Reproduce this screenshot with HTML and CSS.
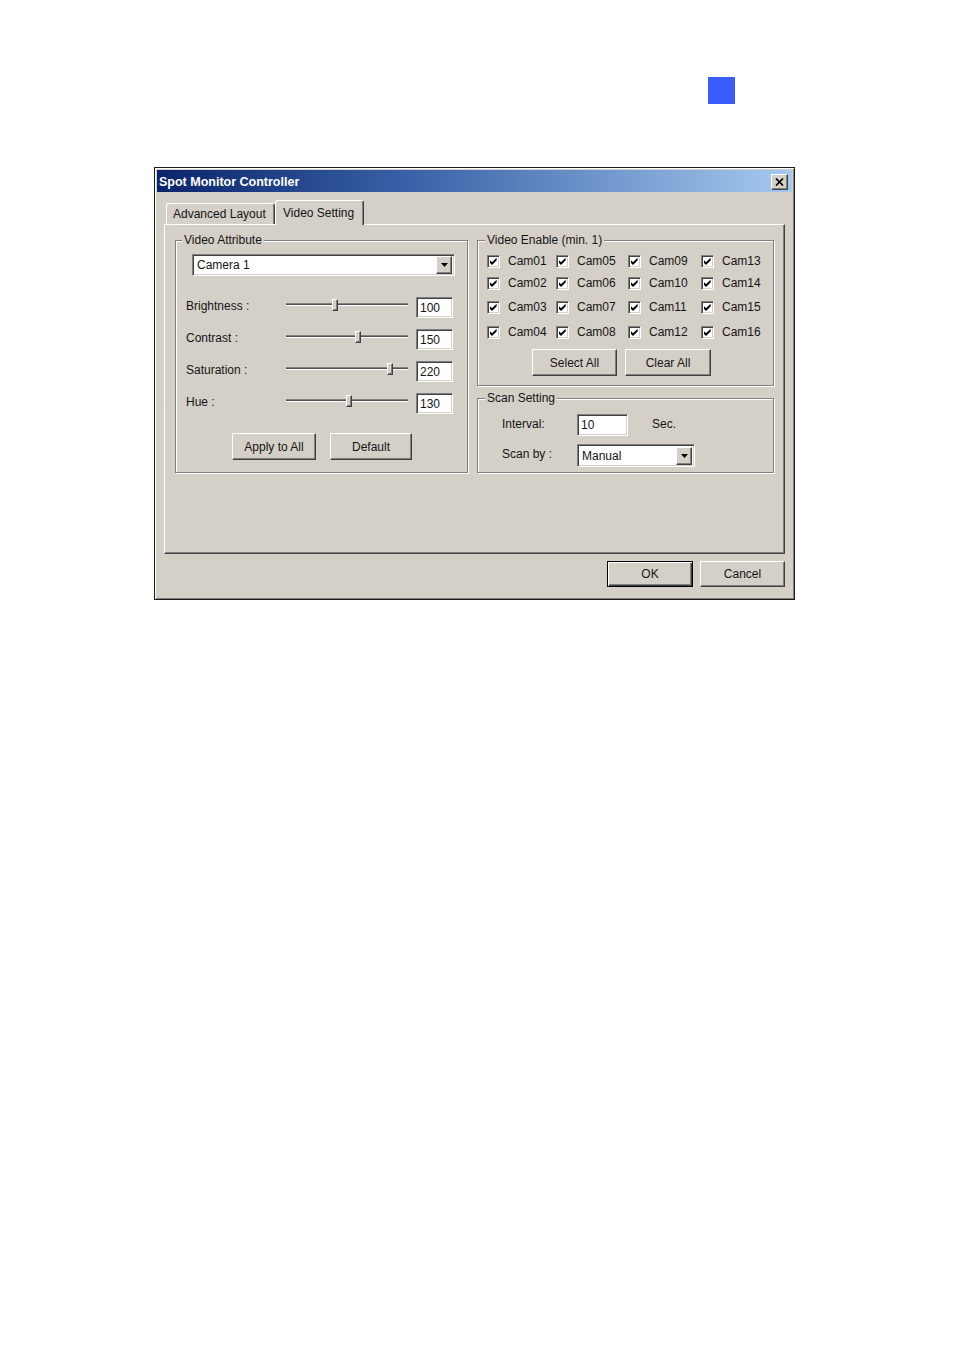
FILE: index.html
```html
<!DOCTYPE html>
<html>
<head>
<meta charset="utf-8">
<title>Spot Monitor Controller</title>
<link rel="stylesheet" href="styles.css">
</head>
<body>
<div class="page">
  <div class="marker"></div>
  <div class="dialog">
    <div class="titlebar">
      <span class="title">Spot Monitor Controller</span>
      <span class="close-btn raised">
        <svg width="9" height="8" viewBox="0 0 9 8"><path d="M1 0.5 L8 7.5 M8 0.5 L1 7.5" stroke="#000" stroke-width="1.7" fill="none"/></svg>
      </span>
    </div>
    <div class="dlg-body">
      <div class="tabs">
        <div class="tab tab-adv">Advanced Layout</div>
        <div class="tab tab-active">Video Setting</div>
      </div>
      <div class="panel">
        <fieldset class="group group-attr">
          <legend>Video Attribute</legend>
          <div class="combo combo-camera sunken">
            <span class="combo-text">Camera 1</span>
            <span class="combo-btn raised"><svg width="7" height="4" viewBox="0 0 7 4"><path d="M0 0 H7 L3.5 4 Z" fill="#000"/></svg></span>
          </div>
          <div class="sliders">
            <div class="srow">
              <span class="slabel">Brightness :</span>
              <div class="slider"><div class="track"></div><div class="thumb raised" style="left:46px"></div></div>
              <span class="edit edit-val sunken">100</span>
            </div>
            <div class="srow">
              <span class="slabel">Contrast :</span>
              <div class="slider"><div class="track"></div><div class="thumb raised" style="left:69px"></div></div>
              <span class="edit edit-val sunken">150</span>
            </div>
            <div class="srow">
              <span class="slabel">Saturation :</span>
              <div class="slider"><div class="track"></div><div class="thumb raised" style="left:101px"></div></div>
              <span class="edit edit-val sunken">220</span>
            </div>
            <div class="srow">
              <span class="slabel">Hue :</span>
              <div class="slider"><div class="track"></div><div class="thumb raised" style="left:60px"></div></div>
              <span class="edit edit-val sunken">130</span>
            </div>
          </div>
          <div class="btnrow btnrow-attr">
            <span class="btn raised btn-apply">Apply to All</span>
            <span class="btn raised btn-default">Default</span>
          </div>
        </fieldset>
        <div class="rightcol">
          <fieldset class="group group-enable">
            <legend>Video Enable (min. 1)</legend>
            <div class="camgrid">
              <label class="cam"><span class="cb sunken"><svg width="9" height="9" viewBox="0 0 9 9"><path d="M1 3.2 L3 5.2 L7.6 0.8 V3.6 L3 8 L1 6 Z" fill="#000"/></svg></span>Cam01</label>
              <label class="cam"><span class="cb sunken"><svg width="9" height="9" viewBox="0 0 9 9"><path d="M1 3.2 L3 5.2 L7.6 0.8 V3.6 L3 8 L1 6 Z" fill="#000"/></svg></span>Cam05</label>
              <label class="cam"><span class="cb sunken"><svg width="9" height="9" viewBox="0 0 9 9"><path d="M1 3.2 L3 5.2 L7.6 0.8 V3.6 L3 8 L1 6 Z" fill="#000"/></svg></span>Cam09</label>
              <label class="cam"><span class="cb sunken"><svg width="9" height="9" viewBox="0 0 9 9"><path d="M1 3.2 L3 5.2 L7.6 0.8 V3.6 L3 8 L1 6 Z" fill="#000"/></svg></span>Cam13</label>
              <label class="cam"><span class="cb sunken"><svg width="9" height="9" viewBox="0 0 9 9"><path d="M1 3.2 L3 5.2 L7.6 0.8 V3.6 L3 8 L1 6 Z" fill="#000"/></svg></span>Cam02</label>
              <label class="cam"><span class="cb sunken"><svg width="9" height="9" viewBox="0 0 9 9"><path d="M1 3.2 L3 5.2 L7.6 0.8 V3.6 L3 8 L1 6 Z" fill="#000"/></svg></span>Cam06</label>
              <label class="cam"><span class="cb sunken"><svg width="9" height="9" viewBox="0 0 9 9"><path d="M1 3.2 L3 5.2 L7.6 0.8 V3.6 L3 8 L1 6 Z" fill="#000"/></svg></span>Cam10</label>
              <label class="cam"><span class="cb sunken"><svg width="9" height="9" viewBox="0 0 9 9"><path d="M1 3.2 L3 5.2 L7.6 0.8 V3.6 L3 8 L1 6 Z" fill="#000"/></svg></span>Cam14</label>
              <label class="cam"><span class="cb sunken"><svg width="9" height="9" viewBox="0 0 9 9"><path d="M1 3.2 L3 5.2 L7.6 0.8 V3.6 L3 8 L1 6 Z" fill="#000"/></svg></span>Cam03</label>
              <label class="cam"><span class="cb sunken"><svg width="9" height="9" viewBox="0 0 9 9"><path d="M1 3.2 L3 5.2 L7.6 0.8 V3.6 L3 8 L1 6 Z" fill="#000"/></svg></span>Cam07</label>
              <label class="cam"><span class="cb sunken"><svg width="9" height="9" viewBox="0 0 9 9"><path d="M1 3.2 L3 5.2 L7.6 0.8 V3.6 L3 8 L1 6 Z" fill="#000"/></svg></span>Cam11</label>
              <label class="cam"><span class="cb sunken"><svg width="9" height="9" viewBox="0 0 9 9"><path d="M1 3.2 L3 5.2 L7.6 0.8 V3.6 L3 8 L1 6 Z" fill="#000"/></svg></span>Cam15</label>
              <label class="cam"><span class="cb sunken"><svg width="9" height="9" viewBox="0 0 9 9"><path d="M1 3.2 L3 5.2 L7.6 0.8 V3.6 L3 8 L1 6 Z" fill="#000"/></svg></span>Cam04</label>
              <label class="cam"><span class="cb sunken"><svg width="9" height="9" viewBox="0 0 9 9"><path d="M1 3.2 L3 5.2 L7.6 0.8 V3.6 L3 8 L1 6 Z" fill="#000"/></svg></span>Cam08</label>
              <label class="cam"><span class="cb sunken"><svg width="9" height="9" viewBox="0 0 9 9"><path d="M1 3.2 L3 5.2 L7.6 0.8 V3.6 L3 8 L1 6 Z" fill="#000"/></svg></span>Cam12</label>
              <label class="cam"><span class="cb sunken"><svg width="9" height="9" viewBox="0 0 9 9"><path d="M1 3.2 L3 5.2 L7.6 0.8 V3.6 L3 8 L1 6 Z" fill="#000"/></svg></span>Cam16</label>
            </div>
            <div class="btnrow btnrow-enable">
              <span class="btn raised btn-select">Select All</span>
              <span class="btn raised btn-clear">Clear All</span>
            </div>
          </fieldset>
          <fieldset class="group group-scan">
            <legend>Scan Setting</legend>
            <div class="scanrow scanrow-interval">
              <span class="scanlabel">Interval:</span>
              <span class="edit edit-interval sunken">10</span>
              <span class="sec">Sec.</span>
            </div>
            <div class="scanrow scanrow-by">
              <span class="scanlabel">Scan by :</span>
              <div class="combo combo-scan sunken">
                <span class="combo-text">Manual</span>
                <span class="combo-btn raised"><svg width="7" height="4" viewBox="0 0 7 4"><path d="M0 0 H7 L3.5 4 Z" fill="#000"/></svg></span>
              </div>
            </div>
          </fieldset>
        </div>
      </div>
      <div class="footer">
        <span class="btn btn-ok">OK</span>
        <span class="btn raised btn-cancel">Cancel</span>
      </div>
    </div>
  </div>
</div>
</body>
</html>
```

FILE: styles.css
```css
* { box-sizing: border-box; }

body {
  margin: 0;
  background: #ffffff;
  font-family: "Liberation Sans", Arial, sans-serif;
  font-size: 12px;
  color: #141414;
}

.page { padding-top: 77px; }

.marker {
  width: 27px;
  height: 27px;
  margin-left: 708px;
  background: #3a5cfd;
}

/* generic win-classic bevels */
.raised {
  background: #d4d0c8;
  border: 1px solid;
  border-color: #ffffff #404040 #404040 #ffffff;
  box-shadow: inset -1px -1px 0 #808080;
}
.sunken {
  background: #ffffff;
  border: 1px solid;
  border-color: #808080 #ffffff #ffffff #808080;
  box-shadow: inset 1px 1px 0 #404040, inset -1px -1px 0 #d4d0c8;
}

.dialog {
  margin: 63px 0 0 154px;
  width: 641px;
  height: 433px;
  border: 1px solid #1c1c1c;
  padding: 2px;
  background: #d4d0c8;
  box-shadow: inset 1px 1px 0 #ffffff, inset -1px -1px 0 #808080;
  display: flex;
  flex-direction: column;
}

.titlebar {
  height: 22px;
  flex: none;
  display: flex;
  align-items: center;
  justify-content: space-between;
  background: linear-gradient(to right, #0a246a 0%, #3a62a8 40%, #a6caf0 100%);
  padding: 1px 4px 0 2px;
}
.title {
  color: #ffffff;
  font-weight: bold;
  font-size: 12.5px;
}
.close-btn {
  width: 17px;
  height: 16px;
  display: flex;
  align-items: center;
  justify-content: center;
}

.dlg-body {
  flex: 1;
  padding: 8px 7px 0 7px;
  display: flex;
  flex-direction: column;
}

.tabs {
  height: 24px;
  display: flex;
  align-items: flex-end;
  padding-left: 2px;
}
.tab {
  height: 21px;
  display: flex;
  align-items: center;
  background: #d4d0c8;
  border-top: 1px solid #ffffff;
  border-left: 1px solid #ffffff;
  border-right: 1px solid #404040;
  box-shadow: inset -1px 0 0 #808080;
  border-radius: 3px 3px 0 0;
}
.tab-adv {
  width: 109px;
  padding-left: 6px;
}
.tab-active {
  width: 89px;
  height: 25px;
  padding-left: 7px;
  padding-bottom: 1px;
  margin-bottom: -1px;
  position: relative;
  z-index: 1;
}

.panel {
  height: 330px;
  flex: none;
  display: flex;
  align-items: flex-start;
  gap: 9px;
  padding: 8px 10px 0 10px;
  border: 1px solid;
  border-color: #ffffff #404040 #404040 #ffffff;
  box-shadow: inset -1px -1px 0 #808080;
}

.group {
  margin: 0;
  padding: 0;
  min-inline-size: 0;
  border: 1px solid #808080;
  box-shadow: 1px 1px 0 #ffffff, inset 1px 1px 0 #ffffff;
}
.group legend {
  margin-left: 6px;
  padding: 0 2px;
  line-height: 14px;
  background: #d4d0c8;
}
.group-enable legend,
.group-scan legend { margin-left: 7px; }

/* left group */
.group-attr {
  width: 293px;
  padding-bottom: 12px;
}
.combo {
  display: flex;
  align-items: center;
  justify-content: space-between;
  padding: 2px;
}
.combo-text { padding-left: 2px; }
.combo-btn {
  width: 16px;
  height: 18px;
  display: flex;
  align-items: center;
  justify-content: center;
}
.combo-camera {
  margin: 7px 0 0 16px;
  width: 263px;
  height: 22px;
}
.sliders {
  margin-top: 21px;
  display: flex;
  flex-direction: column;
  gap: 11px;
}
.srow {
  height: 21px;
  display: flex;
  align-items: center;
  padding-left: 10px;
}
.slabel {
  width: 100px;
  padding-bottom: 4px;
}
.slider {
  position: relative;
  width: 122px;
  height: 21px;
}
.track {
  margin-top: 6px;
  height: 3px;
  border-top: 1px solid #808080;
  border-bottom: 1px solid #ffffff;
  background: #505050;
}
.thumb {
  position: absolute;
  top: 2px;
  width: 6px;
  height: 12px;
}
.edit {
  display: flex;
  align-items: center;
  padding-left: 3px;
}
.edit-val {
  margin-left: 8px;
  width: 37px;
  height: 21px;
}

.btnrow {
  display: flex;
}
.btn {
  height: 27px;
  display: flex;
  align-items: center;
  justify-content: center;
}
.btnrow-attr {
  margin-top: 19px;
  padding-left: 56px;
  gap: 14px;
}
.btn-apply { width: 84px; }
.btn-default { width: 82px; }

/* right column */
.rightcol {
  display: flex;
  flex-direction: column;
  gap: 5px;
}
.group-enable {
  width: 297px;
  padding-bottom: 9px;
}
.camgrid {
  margin: 3px 0 0 9px;
  display: grid;
  grid-template-columns: 69px 72px 73px 1fr;
  grid-template-rows: 22px 22px 26px 24px;
}
.cam {
  display: flex;
  align-items: center;
  gap: 8px;
}
.cb {
  width: 13px;
  height: 13px;
  padding: 1px;
  display: flex;
  align-items: center;
  justify-content: center;
}
.btnrow-enable {
  margin-top: 5px;
  padding-left: 54px;
  gap: 8px;
}
.btn-select { width: 85px; }
.btn-clear { width: 86px; }

.group-scan {
  width: 297px;
  padding-bottom: 5px;
}
.scanrow {
  display: flex;
  align-items: center;
  padding-left: 24px;
}
.scanrow-interval {
  margin-top: 9px;
  height: 22px;
}
.scanrow-by {
  margin-top: 8px;
  height: 23px;
}
.scanlabel {
  width: 75px;
  padding-bottom: 3px;
}
.edit-interval {
  width: 51px;
  height: 22px;
}
.sec {
  margin-left: 24px;
  padding-bottom: 3px;
}
.combo-scan {
  width: 118px;
  height: 23px;
}

.footer {
  margin-top: 7px;
  display: flex;
  justify-content: flex-end;
  gap: 7px;
}
.btn-ok {
  width: 86px;
  height: 26px;
  background: #d4d0c8;
  border: 1px solid #000000;
  box-shadow: inset 1px 1px 0 #ffffff, inset -1px -1px 0 #404040, inset -2px -2px 0 #808080;
}
.btn-cancel {
  width: 85px;
  height: 26px;
}
```
